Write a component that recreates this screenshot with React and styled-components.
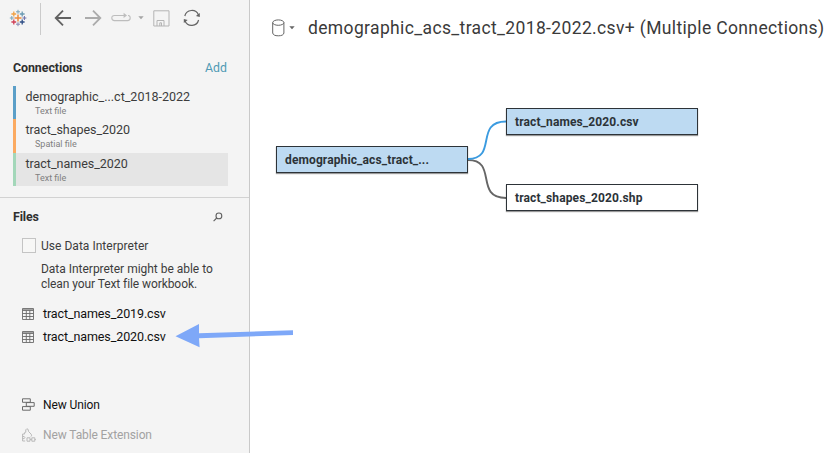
import React from 'react';
import styled, { createGlobalStyle } from 'styled-components';

const GlobalStyle = createGlobalStyle`
  *, *::before, *::after { box-sizing: border-box; }
  body {
    margin: 0;
    background: #fff;
    color: #3c3c3c;
    font-family: Roboto, "Liberation Sans", sans-serif;
    font-weight: 400;
    overflow: hidden;
  }
  svg { display: block; flex: none; }
`;

const Window = styled.div`
  display: flex;
  width: 828px;
  height: 453px;
`;

const Sidebar = styled.aside`
  flex: none;
  display: flex;
  flex-direction: column;
  width: 250px;
  background: #f4f4f4;
  border-right: 1px solid #c9c9c9;
`;

const Toolbar = styled.header`
  display: flex;
  align-items: flex-start;
  height: 60px;
  padding: 3px 0 0 9px;
`;

const ToolButton = styled.div`
  display: flex;
  align-items: center;
  height: 30px;
  margin-left: ${(p) => p.$gap ?? 0}px;
`;

const ToolDivider = styled.div`
  width: 1px;
  height: 32px;
  margin-left: 13px;
  background: #cbcbcb;
`;

const SectionHeader = styled.div`
  display: flex;
  justify-content: space-between;
  align-items: center;
  height: 16px;
  padding: 0 ${(p) => p.$right}px 0 13px;
  line-height: 16px;
`;

const SectionTitle = styled.h2`
  margin: 0;
  font-size: 12.4px;
  font-weight: 700;
  letter-spacing: ${(p) => p.$tracking}px;
  color: #2f2f2f;
`;

const AddLink = styled.a`
  font-size: 12.3px;
  color: #4f9ab5;
`;

const ConnectionList = styled.ul`
  margin: 10px 21px 0 13px;
  padding: 0;
  list-style: none;
`;

const Connection = styled.li`
  height: 33.33px;
  padding: 3px 0 0 9.5px;
  border-left: 3px solid ${(p) => p.$color};
  background: ${(p) => (p.$selected ? '#e5e5e5' : 'transparent')};
`;

const ConnectionName = styled.div`
  font-size: 12.5px;
  line-height: 16px;
  letter-spacing: ${(p) => p.$tracking ?? 0}px;
`;

const ConnectionType = styled.div`
  padding-left: 9.5px;
  font-size: 9px;
  line-height: 12px;
  color: #808080;
`;

const FilesSection = styled.section`
  display: flex;
  flex-direction: column;
  margin-top: 11px;
  padding-top: 11px;
  border-top: 1px solid #d2d2d2;
`;

const InterpreterOption = styled.label`
  display: flex;
  gap: 5px;
  margin: 13px 0 0 22px;
  font-size: 12px;
  line-height: 16px;
  letter-spacing: 0.03px;
`;

const CheckBox = styled.span`
  width: 14px;
  height: 15px;
  border: 1px solid #c4c4c4;
  background: #f7f7f6;
`;

const InterpreterHint = styled.p`
  margin: 8px 0 0 41px;
  font-size: 12px;
  line-height: 15px;
`;

const HintLine = styled.span`
  display: block;
  letter-spacing: ${(p) => p.$tracking}px;
`;

const ItemList = styled.div`
  display: flex;
  flex-direction: column;
  gap: ${(p) => p.$gap}px;
  margin: ${(p) => p.$top}px 0 0 22px;
`;

const Item = styled.div`
  display: flex;
  align-items: center;
  height: 16px;
  font-size: ${(p) => p.$size}px;
  line-height: 16px;
  letter-spacing: -0.11px;
  color: ${(p) => (p.$disabled ? '#a2a2a2' : '#111')};
`;

const ItemIcon = styled.span`
  width: 21px;
  color: ${(p) => (p.$disabled ? '#b9b9b9' : '#6b6b6b')};
`;

const Main = styled.main`
  flex: 1;
  display: flex;
  flex-direction: column;
  min-width: 0;
`;

const TitleBar = styled.div`
  display: flex;
  align-items: center;
  height: 56px;
  padding-left: 22px;
`;

const Title = styled.h1`
  margin: 0 0 0 13.5px;
  font-size: 17.5px;
  font-weight: 400;
  line-height: 24px;
  letter-spacing: 0.36px;
  white-space: nowrap;
  color: #3a3a3a;
`;

const Canvas = styled.div`
  position: relative;
  flex: 1;
`;

const Node = styled.div`
  position: absolute;
  left: ${(p) => p.$x}px;
  top: ${(p) => p.$y}px;
  width: 192px;
  height: 27px;
  padding-left: 8px;
  border: 1px solid #2d3338;
  background: ${(p) => (p.$filled ? '#bddaf2' : '#fff')};
  box-shadow: 0 1px 1px rgba(0, 0, 0, 0.4);
  font-size: 12px;
  font-weight: 700;
  line-height: 26px;
  letter-spacing: 0.12px;
  color: #2c3338;
`;

const Links = styled.svg`
  position: absolute;
  left: 218px;
  top: 52px;
`;

const Callout = styled.svg`
  position: absolute;
  left: 174px;
  top: 320px;
`;

const LOGO = [
  [9, 9, 3.5, '#eb8a3c', 1.5],
  [9, 2.8, 2, '#7ba3b8', 1],
  [9, 15.2, 2, '#8587b0', 1],
  [2.8, 9, 2, '#7ba3b8', 1],
  [15.4, 9, 2, '#6d70a8', 1],
  [4.8, 5, 2.4, '#f0a145', 1.3],
  [13.2, 5, 2.4, '#6a9ab2', 1.3],
  [4.8, 13, 2.4, '#cf3f55', 1.3],
  [13.2, 13, 2.4, '#304f86', 1.3],
];

const Logo = () => (
  <svg width="18" height="18" viewBox="0 0 18 18">
    {LOGO.map(([x, y, r, color, w]) => (
      <path
        key={`${x}-${y}`}
        d={`M${x - r} ${y}H${x + r}M${x} ${y - r}V${y + r}`}
        stroke={color}
        strokeWidth={w}
      />
    ))}
  </svg>
);

const ArrowIcon = ({ color, forward }) => (
  <svg width="18" height="18" viewBox="0 0 18 18" fill="none" stroke={color} strokeWidth="1.8">
    <path d={forward ? 'M1 9H16M9 1.7L16.3 9L9 16.3' : 'M17 9H2M9 1.7L1.7 9L9 16.3'} />
  </svg>
);

const ReplayIcon = () => (
  <svg width="20" height="12" viewBox="0 0 20 12" fill="none" stroke="#bdbdbd" strokeWidth="1.1">
    <path d="M14 3.5H3.5Q.8 3.5 .8 6T3.5 8.6H16.5Q19.2 8.6 19.2 6T17 3.5" />
    <path d="M12.6 .8L16 3.5L12.6 6Z" fill="#bdbdbd" stroke="none" />
  </svg>
);

const Caret = ({ color }) => (
  <svg width="6" height="4" viewBox="0 0 6 4">
    <path d="M.3 .3H5.7L3 3.3Z" fill={color} />
  </svg>
);

const SaveIcon = () => (
  <svg width="17" height="17" viewBox="0 0 17 17" fill="none" stroke="#b4b4b4">
    <path d="M.8 .8H16V16H.8Z" />
    <path d="M4 16V10.5H11V16M6.8 16V12.8H8.5V16" />
  </svg>
);

const RefreshIcon = () => (
  <svg width="18" height="18" viewBox="0 0 18 18" fill="none" stroke="#636363" strokeWidth="1.2">
    <path d="M1.8 7A7.2 7.2 0 0 1 15.5 6M15.6 11A7.2 7.2 0 0 1 2 12" />
    <path d="M16.8 4V8L12.9 7ZM.8 14V10L4.7 11Z" fill="#636363" stroke="none" />
  </svg>
);

const SearchIcon = () => (
  <svg width="10" height="10" viewBox="0 0 10 10" fill="none" stroke="#606060" strokeWidth="1.1">
    <circle cx="5.9" cy="3.9" r="2.9" />
    <path d="M3.7 6L.6 9.2" />
  </svg>
);

const TableIcon = () => (
  <svg width="12" height="12" viewBox="0 0 12 12" fill="none" stroke="currentColor">
    <path d="M.5 .5H11.5V11.5H.5ZM.5 2.5H11.5M.5 5.5H11.5M.5 8.5H11.5M4.3 2.5V11.5M7.8 2.5V11.5" strokeWidth=".9" />
    <path d="M.5 1.5H11.5" opacity=".6" />
  </svg>
);

const UnionIcon = () => (
  <svg width="13" height="13" viewBox="0 0 13 13" fill="none" stroke="currentColor">
    <path d="M.5 .8H8.3V4.3H.5ZM4.3 4.6H12.2V8.3H4.3ZM.5 8.6H8.3V12.2H.5Z" />
  </svg>
);

const ExtensionIcon = () => (
  <svg width="14" height="14" viewBox="0 0 14 14" fill="none" stroke="currentColor">
    <path d="M.6 13V6H2.6V4.6L3.8 4.2Q3.2 1.2 4.8 .8T6.6 3.6L9.2 6.2Q10.4 8.2 8.6 8.7" />
    <path d="M.6 8.5H2.2Q3.6 9.6 2.2 10.6H.6M.6 13H3.2" />
    <path d="M5 9.8H8V13.2H5ZM9.8 9.8H12.8V13.2H9.8ZM8 11.5H9.8M12.8 11.5H13.8" />
  </svg>
);

const DatabaseIcon = () => (
  <svg width="13" height="18" viewBox="0 0 13 18" fill="none" stroke="#666">
    <ellipse cx="6.3" cy="3.6" rx="5.6" ry="2.7" />
    <path d="M.7 3.6V14Q1.2 16.8 6.3 16.8T11.9 14V3.6" />
  </svg>
);

const CONNECTIONS = [
  { name: 'demographic_...ct_2018-2022', type: 'Text file', color: '#5b9fc8' },
  { name: 'tract_shapes_2020', type: 'Spatial file', color: '#fbaa61', tracking: -0.04 },
  { name: 'tract_names_2020', type: 'Text file', color: '#a3d7b9', tracking: -0.02 },
];

const FILES = ['tract_names_2019.csv', 'tract_names_2020.csv'];

export default function App() {
  return (
    <Window>
      <GlobalStyle />
      <Sidebar>
        <Toolbar>
          <ToolButton><Logo /></ToolButton>
          <ToolDivider />
          <ToolButton $gap={12.5}><ArrowIcon color="#626262" /></ToolButton>
          <ToolButton $gap={12.5}><ArrowIcon color="#ababab" forward /></ToolButton>
          <ToolButton $gap={9}><ReplayIcon /></ToolButton>
          <ToolButton $gap={7}><Caret color="#a5a5a5" /></ToolButton>
          <ToolButton $gap={9}><SaveIcon /></ToolButton>
          <ToolButton $gap={12.5}><RefreshIcon /></ToolButton>
        </Toolbar>

        <SectionHeader $right={22}>
          <SectionTitle $tracking={-0.06}>Connections</SectionTitle>
          <AddLink>Add</AddLink>
        </SectionHeader>
        <ConnectionList>
          {CONNECTIONS.map((c, i) => (
            <Connection key={c.name} $color={c.color} $selected={i === 2}>
              <ConnectionName $tracking={c.tracking}>{c.name}</ConnectionName>
              <ConnectionType>{c.type}</ConnectionType>
            </Connection>
          ))}
        </ConnectionList>

        <FilesSection>
          <SectionHeader $right={26}>
            <SectionTitle $tracking={-0.15}>Files</SectionTitle>
            <SearchIcon />
          </SectionHeader>
          <InterpreterOption>
            <CheckBox />
            Use Data Interpreter
          </InterpreterOption>
          <InterpreterHint>
            <HintLine $tracking={-0.02}>Data Interpreter might be able to</HintLine>
            <HintLine $tracking={-0.08}>clean your Text file workbook.</HintLine>
          </InterpreterHint>
          <ItemList $top={14} $gap={7}>
            {FILES.map((f) => (
              <Item key={f} $size={12.5}>
                <ItemIcon><TableIcon /></ItemIcon>
                {f}
              </Item>
            ))}
          </ItemList>
          <ItemList $top={52} $gap={14}>
            <Item $size={12}>
              <ItemIcon><UnionIcon /></ItemIcon>
              New Union
            </Item>
            <Item $size={12} $disabled>
              <ItemIcon $disabled><ExtensionIcon /></ItemIcon>
              New Table Extension
            </Item>
          </ItemList>
        </FilesSection>
      </Sidebar>

      <Main>
        <TitleBar>
          <DatabaseIcon />
          <ToolButton $gap={3.5}><Caret color="#666" /></ToolButton>
          <Title>demographic_acs_tract_2018-2022.csv+ (Multiple Connections)</Title>
        </TitleBar>
        <Canvas>
          <Links width="40" height="96" viewBox="0 0 40 96" fill="none" strokeWidth="1.9">
            <path d="M0 52C30 52 6 90 38 90" stroke="#666" />
            <path d="M0 51C30 51 6 13.5 38 13.5" stroke="#3b9be0" />
          </Links>
          <Node $x={26} $y={90} $filled>demographic_acs_tract_...</Node>
          <Node $x={256} $y={52} $filled>tract_names_2020.csv</Node>
          <Node $x={256} $y={128}>tract_shapes_2020.shp</Node>
        </Canvas>
      </Main>

      <Callout width="122" height="30" viewBox="0 0 122 30">
        <path d="M1.5 16.3L25 4V13.2L119 10.2V15L25 18.2L25.6 27.2Z" fill="#7ea8f8" />
      </Callout>
    </Window>
  );
}
